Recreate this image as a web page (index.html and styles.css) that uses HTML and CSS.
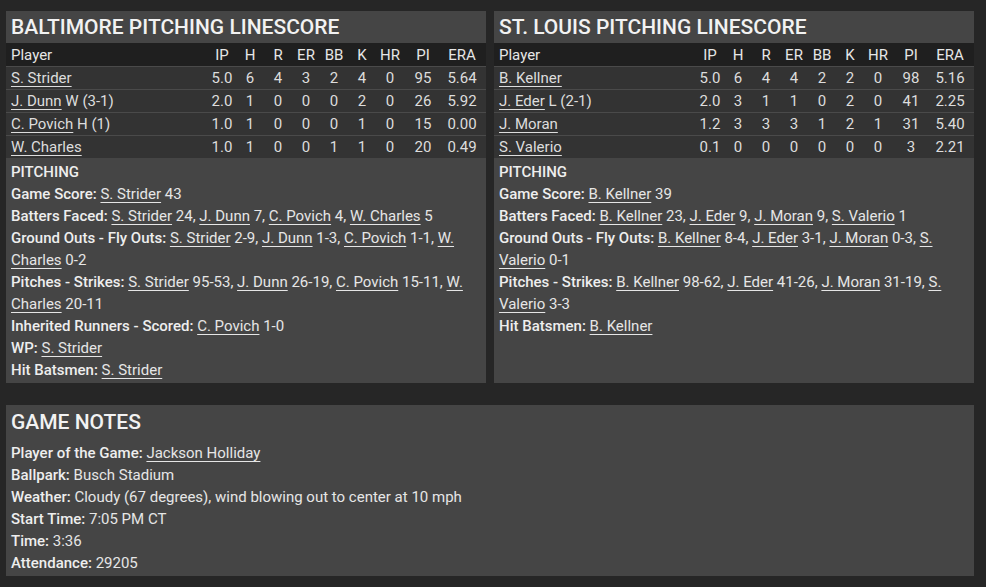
FILE: index.html
```html
<!DOCTYPE html>
<html lang="en">
<head>
  <meta charset="UTF-8">
  <title>Pitching Linescore</title>
  <link rel="stylesheet" href="styles.css">
</head>
<body>

  <div class="page">
    <div class="linescores">

      <section class="panel">
        <h2 class="panel-title">BALTIMORE PITCHING LINESCORE</h2>
        <table class="linescore">
          <colgroup>
            <col><col class="c28"><col class="c28"><col class="c28"><col class="c28"><col class="c28"><col class="c28"><col class="c28"><col class="c38"><col class="c44">
          </colgroup>
          <thead>
            <tr><th class="player">Player</th><th>IP</th><th>H</th><th>R</th><th>ER</th><th>BB</th><th>K</th><th>HR</th><th>PI</th><th>ERA</th></tr>
          </thead>
          <tbody>
            <tr><td class="player"><a href="#">S. Strider</a></td><td>5.0</td><td>6</td><td>4</td><td>3</td><td>2</td><td>4</td><td>0</td><td>95</td><td>5.64</td></tr>
            <tr><td class="player"><a href="#">J. Dunn</a> W (3-1)</td><td>2.0</td><td>1</td><td>0</td><td>0</td><td>0</td><td>2</td><td>0</td><td>26</td><td>5.92</td></tr>
            <tr><td class="player"><a href="#">C. Povich</a> H (1)</td><td>1.0</td><td>1</td><td>0</td><td>0</td><td>0</td><td>1</td><td>0</td><td>15</td><td>0.00</td></tr>
            <tr><td class="player"><a href="#">W. Charles</a></td><td>1.0</td><td>1</td><td>0</td><td>0</td><td>1</td><td>1</td><td>0</td><td>20</td><td>0.49</td></tr>
          </tbody>
        </table>
        <div class="pitching">
          <div><b>PITCHING</b></div>
          <div><b>Game Score:</b> <a href="#">S. Strider</a> 43</div>
          <div><b>Batters Faced:</b> <a href="#">S. Strider</a> 24, <a href="#">J. Dunn</a> 7, <a href="#">C. Povich</a> 4, <a href="#">W. Charles</a> 5</div>
          <div><b>Ground Outs - Fly Outs:</b> <a href="#">S. Strider</a> 2-9, <a href="#">J. Dunn</a> 1-3, <a href="#">C. Povich</a> 1-1, <a href="#">W. Charles</a> 0-2</div>
          <div><b>Pitches - Strikes:</b> <a href="#">S. Strider</a> 95-53, <a href="#">J. Dunn</a> 26-19, <a href="#">C. Povich</a> 15-11, <a href="#">W. Charles</a> 20-11</div>
          <div><b>Inherited Runners - Scored:</b> <a href="#">C. Povich</a> 1-0</div>
          <div><b>WP:</b> <a href="#">S. Strider</a></div>
          <div><b>Hit Batsmen:</b> <a href="#">S. Strider</a></div>
        </div>
      </section>

      <section class="panel">
        <h2 class="panel-title">ST. LOUIS PITCHING LINESCORE</h2>
        <table class="linescore">
          <colgroup>
            <col><col class="c28"><col class="c28"><col class="c28"><col class="c28"><col class="c28"><col class="c28"><col class="c28"><col class="c38"><col class="c44">
          </colgroup>
          <thead>
            <tr><th class="player">Player</th><th>IP</th><th>H</th><th>R</th><th>ER</th><th>BB</th><th>K</th><th>HR</th><th>PI</th><th>ERA</th></tr>
          </thead>
          <tbody>
            <tr><td class="player"><a href="#">B. Kellner</a></td><td>5.0</td><td>6</td><td>4</td><td>4</td><td>2</td><td>2</td><td>0</td><td>98</td><td>5.16</td></tr>
            <tr><td class="player"><a href="#">J. Eder</a> L (2-1)</td><td>2.0</td><td>3</td><td>1</td><td>1</td><td>0</td><td>2</td><td>0</td><td>41</td><td>2.25</td></tr>
            <tr><td class="player"><a href="#">J. Moran</a></td><td>1.2</td><td>3</td><td>3</td><td>3</td><td>1</td><td>2</td><td>1</td><td>31</td><td>5.40</td></tr>
            <tr><td class="player"><a href="#">S. Valerio</a></td><td>0.1</td><td>0</td><td>0</td><td>0</td><td>0</td><td>0</td><td>0</td><td>3</td><td>2.21</td></tr>
          </tbody>
        </table>
        <div class="pitching">
          <div><b>PITCHING</b></div>
          <div><b>Game Score:</b> <a href="#">B. Kellner</a> 39</div>
          <div><b>Batters Faced:</b> <a href="#">B. Kellner</a> 23, <a href="#">J. Eder</a> 9, <a href="#">J. Moran</a> 9, <a href="#">S. Valerio</a> 1</div>
          <div><b>Ground Outs - Fly Outs:</b> <a href="#">B. Kellner</a> 8-4, <a href="#">J. Eder</a> 3-1, <a href="#">J. Moran</a> 0-3, <a href="#">S. Valerio</a> 0-1</div>
          <div><b>Pitches - Strikes:</b> <a href="#">B. Kellner</a> 98-62, <a href="#">J. Eder</a> 41-26, <a href="#">J. Moran</a> 31-19, <a href="#">S. Valerio</a> 3-3</div>
          <div><b>Hit Batsmen:</b> <a href="#">B. Kellner</a></div>
        </div>
      </section>

    </div>

    <section class="panel notes">
      <h2 class="notes-title">GAME NOTES</h2>
      <div><b>Player of the Game:</b> <a href="#">Jackson Holliday</a></div>
      <div><b>Ballpark:</b> Busch Stadium</div>
      <div><b>Weather:</b> Cloudy (67 degrees), wind blowing out to center at 10 mph</div>
      <div><b>Start Time:</b> 7:05 PM CT</div>
      <div><b>Time:</b> 3:36</div>
      <div><b>Attendance:</b> 29205</div>
    </section>
  </div>

</body>
</html>
```

FILE: styles.css
```css
body {
  margin: 0;
  background: #262626;
  font-family: Roboto, "Liberation Sans", sans-serif;
  font-size: 15px;
  color: #e6e6e6;
}
a {
  color: inherit;
  text-decoration: underline;
  text-underline-offset: 3px;
}
b {
  font-weight: 500;
  color: #eeeeee;
}
.page {
  width: 968px;
  padding: 11px 0 0 6px;
}
.linescores {
  display: flex;
  gap: 8px;
}
.panel {
  flex: 1;
  background: #454545;
}
.panel-title {
  margin: 0;
  padding: 0 5px;
  height: 32px;
  line-height: 32px;
  font-size: 21px;
  font-weight: 500;
  color: #f2f2f2;
}
.linescore {
  width: 100%;
  table-layout: fixed;
  border-collapse: collapse;
}
.c28 { width: 28px; }
.c38 { width: 38px; }
.c44 { width: 44px; }
.linescore th,
.linescore td {
  height: 23px;
  padding: 0;
  text-align: center;
  font-weight: normal;
  white-space: nowrap;
}
.linescore th:last-child,
.linescore td:last-child {
  padding-right: 4px;
}
.linescore th.player,
.linescore td.player {
  text-align: left;
  padding-left: 5px;
}
.linescore thead tr {
  background: #1f1f1f;
}
.linescore tbody tr {
  background: #333333;
  border-top: 1px solid #4a4a4a;
}
.linescore td {
  height: 22px;
  color: #dddddd;
}
.pitching {
  padding: 3px 5px 2px;
  line-height: 22px;
}
.notes {
  margin-top: 22px;
  padding: 1px 5px 2px;
  line-height: 22px;
}
.notes-title {
  margin: 0 0 4px;
  height: 32px;
  line-height: 32px;
  font-size: 21px;
  font-weight: 500;
  color: #f2f2f2;
}
```
